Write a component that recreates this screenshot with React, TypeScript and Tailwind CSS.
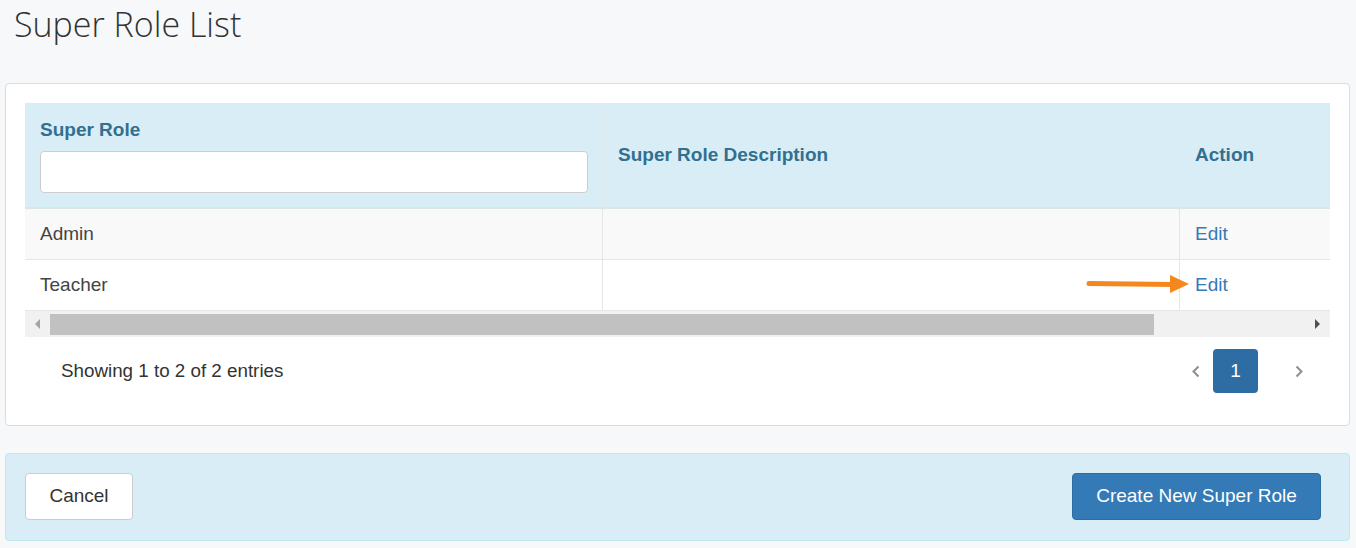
import React from "react";

const rows = [
  { role: "Admin", description: "" },
  { role: "Teacher", description: "" },
];

function Chevron({ dir }: { dir: "left" | "right" }) {
  return (
    <svg width="8" height="13" viewBox="0 0 8 13" fill="none">
      <polyline
        points={dir === "left" ? "6.5,1.5 1.5,6.5 6.5,11.5" : "1.5,1.5 6.5,6.5 1.5,11.5"}
        stroke="#8a8f96"
        strokeWidth="2"
      />
    </svg>
  );
}

function Pointer() {
  return (
    <svg width="104" height="18" viewBox="0 0 104 18" className="absolute left-[-94px] top-[15px]">
      <line x1="3" y1="8.5" x2="88" y2="9.5" stroke="#f5871f" strokeWidth="5" strokeLinecap="round" />
      <polygon points="84,0 103,9 84,18" fill="#f5871f" />
    </svg>
  );
}

const App: React.FC = () => {
  return (
    <div className="min-h-[548px] bg-[#f7f8fa] font-['Liberation_Sans',Arial,sans-serif] text-[#333]">
      {/* Page title */}
      <div className="h-[83px] pl-[14px] pt-[7px]">
        <h1 className="font-['Open_Sans',sans-serif] text-[34px] font-light leading-none text-[#333]">
          Super Role List
        </h1>
      </div>

      {/* List card */}
      <div className="ml-[5px] w-[1345px] rounded-[4px] border border-[#c3e5ef] bg-white p-[19px]">
        <div className="w-[1305px] overflow-hidden">
          <div className="w-[1485px]">
            {/* Header */}
            <div className="grid grid-cols-[578px_577px_330px] border-b-2 border-[#dde4e8] bg-[#d9edf7] text-[19px] font-bold text-[#31708f]">
              <div className="border-r border-[#e3e8ea] px-[15px] pb-[14px] pt-[13px]">
                <div className="leading-[27px]">Super Role</div>
                <input
                  type="text"
                  className="mt-[8px] h-[42px] w-[548px] rounded-[4px] border border-[#ccc] bg-white px-3 outline-none"
                />
              </div>
              <div className="flex items-center border-r border-[#e3e8ea] px-[15px]">Super Role Description</div>
              <div className="flex items-center px-[15px]">Action</div>
            </div>

            {/* Rows */}
            {rows.map((row, i) => (
              <div
                key={row.role}
                className={`grid h-[51px] grid-cols-[578px_577px_330px] border-b border-[#e5e5e5] text-[19px] ${
                  i % 2 === 0 ? "bg-[#f9f9f9]" : "bg-white"
                }`}
              >
                <div className="flex items-center border-r border-[#e5e5e5] px-[15px] text-[#444]">{row.role}</div>
                <div className="flex items-center border-r border-[#e5e5e5] px-[15px]">{row.description}</div>
                <div className="relative flex items-center px-[15px]">
                  {i === 1 && <Pointer />}
                  <a href="#" className="text-[#337ab7]">
                    Edit
                  </a>
                </div>
              </div>
            ))}
          </div>
        </div>

        {/* Horizontal scrollbar */}
        <div className="flex h-[26px] w-[1305px] items-center bg-[#f1f1f1]">
          <div className="flex w-[25px] justify-center">
            <div className="h-0 w-0 border-y-[5px] border-r-[5px] border-y-transparent border-r-[#a3a3a3]" />
          </div>
          <div className="h-[21px] w-[1104px] bg-[#c1c1c1]" />
          <div className="flex-1" />
          <div className="flex w-[25px] justify-center">
            <div className="h-0 w-0 border-y-[5px] border-l-[5px] border-y-transparent border-l-[#505050]" />
          </div>
        </div>

        {/* Info + pagination */}
        <div className="mt-[12px] flex items-center justify-between">
          <div className="pl-[36px] text-[18.8px] text-[#333]">Showing 1 to 2 of 2 entries</div>
          <div className="flex items-center pr-[27px]">
            <Chevron dir="left" />
            <div className="ml-[13px] flex h-[44px] w-[45px] items-center justify-center rounded-[4px] bg-[#2e6da4] text-[19px] text-white">
              1
            </div>
            <div className="ml-[37px]">
              <Chevron dir="right" />
            </div>
          </div>
        </div>
        <div className="h-[13px]" />
      </div>

      {/* Footer actions */}
      <div className="ml-[5px] mt-[27px] flex w-[1345px] items-center justify-between rounded-[4px] border border-[#bce8f1] bg-[#d9edf7] pb-[20px] pl-[19px] pr-[28px] pt-[19px]">
        <button className="h-[47px] w-[108px] rounded-[4px] border border-[#ccc] bg-white text-[19px] text-[#333]">
          Cancel
        </button>
        <button className="h-[47px] w-[249px] rounded-[4px] border border-[#2e6da4] bg-[#337ab7] text-[19px] text-white">
          Create New Super Role
        </button>
      </div>
    </div>
  );
};

export default App;
